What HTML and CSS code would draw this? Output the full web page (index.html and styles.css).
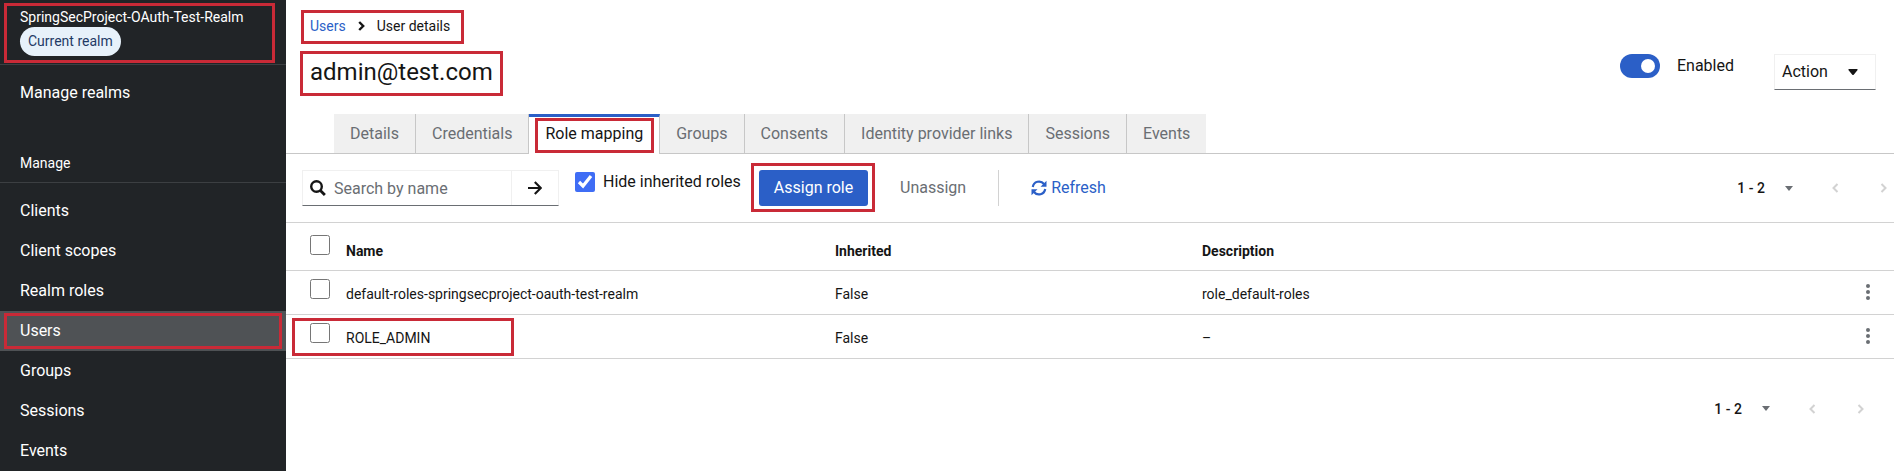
FILE: index.html
```html
<!DOCTYPE html>
<html lang="en">
<head>
<meta charset="utf-8">
<title>User details</title>
<link rel="stylesheet" href="styles.css">
</head>
<body>
<div class="page">
  <aside class="sidebar">
    <div class="realm marked">
      <span>SpringSecProject-OAuth-Test-Realm</span>
      <span class="badge">Current realm</span>
    </div>
    <nav>
      <a class="nav-link nav-realms" href="#">Manage realms</a>
      <h2 class="nav-title">Manage</h2>
      <ul class="nav-list">
        <li><a class="nav-link" href="#">Clients</a></li>
        <li><a class="nav-link" href="#">Client scopes</a></li>
        <li><a class="nav-link" href="#">Realm roles</a></li>
        <li><a class="nav-link current marked" href="#">Users</a></li>
        <li><a class="nav-link" href="#">Groups</a></li>
        <li><a class="nav-link" href="#">Sessions</a></li>
        <li><a class="nav-link" href="#">Events</a></li>
      </ul>
    </nav>
  </aside>
  <main class="main">
    <header class="header">
      <div class="heading">
        <div class="breadcrumb marked">
          <a href="#">Users</a>
          <svg width="7" height="10" viewBox="0 0 7 10"><path d="M1.200 1l4 4-4 4" fill="none" stroke="#151515" stroke-width="2.400"/></svg>
          <span>User details</span>
        </div>
        <h1 class="title marked">admin@test.com</h1>
      </div>
      <div class="actions">
        <label class="switch"><input type="checkbox" role="switch" checked><span>Enabled</span></label>
        <button class="action-menu">Action <svg width="10" height="6" viewBox="0 0 10 6"><path d="M1 0h8q1 .5.400 1.200L5.700 5.700q-.7.500-1.400 0L.6 1.200Q0 .5 1 0z" fill="#151515"/></svg></button>
      </div>
    </header>
    <div class="tabs" role="tablist">
      <button class="tab" role="tab">Details</button>
      <button class="tab" role="tab">Credentials</button>
      <button class="tab selected marked" role="tab" aria-selected="true">Role mapping</button>
      <button class="tab" role="tab">Groups</button>
      <button class="tab" role="tab">Consents</button>
      <button class="tab" role="tab">Identity provider links</button>
      <button class="tab" role="tab">Sessions</button>
      <button class="tab" role="tab">Events</button>
    </div>
    <div class="toolbar">
      <form class="search">
        <svg class="search-icon" width="16" height="16" viewBox="0 0 16 16"><circle cx="6.500" cy="6.500" r="5.300" fill="none" stroke="#151515" stroke-width="2.400"/><path d="M10.400 10.400l4.500 4.500" stroke="#151515" stroke-width="2.800"/></svg>
        <input type="text" placeholder="Search by name" aria-label="Search by name">
        <button type="button" aria-label="Search"><svg width="14" height="14" viewBox="0 0 14 14"><path d="M0 7h12.500M6.800 1l6 6-6 6" fill="none" stroke="#151515" stroke-width="2.200"/></svg></button>
      </form>
      <label class="hide-roles"><input class="check" type="checkbox" checked>Hide inherited roles</label>
      <div class="assign marked"><button class="primary">Assign role</button></div>
      <button class="plain unassign">Unassign</button>
      <button class="plain refresh"><svg width="16" height="16" viewBox="0 0 16 16"><path d="M1.800 7A6.300 6.300 0 0 1 13 4M14.200 9A6.300 6.300 0 0 1 3 12" fill="none" stroke="#2b5fc7" stroke-width="2.200"/><path d="M15.500.8v6H9.500zM.5 15.200v-6h6z" fill="#2b5fc7"/></svg>Refresh</button>
      <div class="pager">
        <button class="range"><span>1 - 2</span><svg width="8" height="5" viewBox="0 0 8 5"><path d="M0 0h8L4 5z" fill="#6a6e73"/></svg></button>
        <button class="step" aria-label="Previous"><svg width="7" height="10" viewBox="0 0 7 10"><path d="M5.500 1l-4 4 4 4" fill="none" stroke="#d2d2d2" stroke-width="2"/></svg></button>
        <button class="step" aria-label="Next"><svg width="7" height="10" viewBox="0 0 7 10"><path d="M1.500 1l4 4-4 4" fill="none" stroke="#d2d2d2" stroke-width="2"/></svg></button>
      </div>
    </div>
    <table class="roles">
      <thead>
        <tr><th class="col-check"><input class="check" type="checkbox" aria-label="Select all"></th><th class="col-name">Name</th><th class="col-inherited">Inherited</th><th>Description</th><th class="col-menu"></th></tr>
      </thead>
      <tbody>
        <tr><td><input class="check" type="checkbox" aria-label="Select default role"></td><td>default-roles-springsecproject-oauth-test-realm</td><td>False</td><td>role_default-roles</td><td><button class="kebab" aria-label="Row actions"><svg width="4" height="16" viewBox="0 0 4 16"><g fill="#6a6e73"><circle cx="2" cy="2" r="2"/><circle cx="2" cy="8" r="2"/><circle cx="2" cy="14" r="2"/></g></svg></button></td></tr>
        <tr><td class="marked"><input class="check" type="checkbox" aria-label="Select ROLE_ADMIN"></td><td>ROLE_ADMIN</td><td>False</td><td>–</td><td><button class="kebab" aria-label="Row actions"><svg width="4" height="16" viewBox="0 0 4 16"><g fill="#6a6e73"><circle cx="2" cy="2" r="2"/><circle cx="2" cy="8" r="2"/><circle cx="2" cy="14" r="2"/></g></svg></button></td></tr>
      </tbody>
    </table>
    <footer class="footer">
      <div class="pager">
        <button class="range"><span>1 - 2</span><svg width="8" height="5" viewBox="0 0 8 5"><path d="M0 0h8L4 5z" fill="#6a6e73"/></svg></button>
        <button class="step" aria-label="Previous"><svg width="7" height="10" viewBox="0 0 7 10"><path d="M5.500 1l-4 4 4 4" fill="none" stroke="#d2d2d2" stroke-width="2"/></svg></button>
        <button class="step" aria-label="Next"><svg width="7" height="10" viewBox="0 0 7 10"><path d="M1.500 1l4 4-4 4" fill="none" stroke="#d2d2d2" stroke-width="2"/></svg></button>
      </div>
    </footer>
  </main>
</div>
</body>
</html>
```
FILE: styles.css
```css
*, *::before, *::after { box-sizing: border-box; }
body { margin: 0; background: #fff; color: #151515; font: 16px/24px Roboto, sans-serif; }
button, input { font: inherit; color: inherit; }
button { border: 0; background: none; padding: 0; }
a { text-decoration: none; color: #2b5fc7; }
svg { flex: none; display: block; }

.page { display: flex; min-height: 100vh; }

/* Red highlight frames laid over the content */
.marked { position: relative; }
.marked::after { content: ""; position: absolute; inset: 0; border: 3px solid #c92a37; pointer-events: none; }

.sidebar { width: 286px; flex: none; background: #212427; color: #fff; }
.realm { display: flex; flex-direction: column; align-items: flex-start; padding: 7px 20px 8px; border-bottom: 1px solid #3c3f42; font-size: 14px; line-height: 20px; }
.realm::after { inset: 3px 11px 1px 4px; }
.badge { padding: 4px 8px; border-radius: 15px; background: #e7f1fa; color: #1f3a66; line-height: 21px; }
.nav-link { display: block; padding: 8px 20px; color: #fff; }
.nav-realms { margin-top: 8px; }
.nav-title { margin: 38px 0 0; padding: 0 20px 7px; border-bottom: 1px solid #3c3f42; font-size: 14px; font-weight: 400; }
.nav-list { list-style: none; margin: 0; padding: 8px 0 0; }
.current { background: #4f5255; }
.current::after { inset: 2px 4px; }

.main { flex: 1; min-width: 0; overflow: hidden; }
.header { display: flex; justify-content: space-between; padding: 16px 18px 24px 24px; }
.breadcrumb { display: flex; align-items: center; gap: 12px; width: fit-content; font-size: 14px; line-height: 20px; }
.breadcrumb::after { inset: -6px -14px -8px -9px; }
.title { margin: 18px 0 0; font-size: 24px; line-height: 36px; font-weight: 400; }
.title::after { inset: -3px -10px -6px -10px; }
.actions { display: flex; gap: 40px; padding-top: 38px; }
.switch { display: flex; gap: 17px; height: 24px; }
.switch input { appearance: none; margin: 0; width: 40px; height: 24px; border-radius: 12px; padding: 5px 5px 5px 21px; background: #2b5fc7; }
.switch input::before { content: ""; display: block; width: 14px; height: 14px; border-radius: 50%; background: #fff; }
.action-menu { display: flex; align-items: center; gap: 20px; width: 102px; height: 36px; padding: 0 7px; border: 1px solid #f0f0f0; border-bottom-color: #6a6e73; }

.tabs { display: flex; padding-left: 48px; border-bottom: 1px solid #c7c7c7; }
.tab { height: 39px; padding: 0 16px; background: #f0f0f0; color: #6a6e73; border-right: 1px solid #c7c7c7; }
.tab:last-child { border-right: 0; }
.selected { height: 40px; margin-bottom: -1px; padding-bottom: 4px; background: #fff; color: #151515; border-top: 3px solid #2b5fc7; }
.selected::after { inset: 1px 5px 1px 6px; }

.toolbar { display: flex; padding: 16px 0; border-bottom: 1px solid #d2d2d2; }
.search { display: flex; align-items: center; width: 257px; height: 36px; margin-left: 16px; border: 1px solid #f0f0f0; border-bottom-color: #6a6e73; }
.search-icon { margin: 0 8px 0 7px; }
.search input { flex: 1; min-width: 0; height: 34px; border: 0; padding: 0; outline: 0; background: none; }
.search input::placeholder { color: #6a6e73; opacity: 1; }
.search button { display: grid; place-items: center; width: 47px; height: 34px; border-left: 1px solid #f0f0f0; }
.check { width: 20px; height: 20px; margin: 0; accent-color: #3f6df5; }
.hide-roles { display: flex; align-items: center; gap: 8px; width: 168px; height: 24px; margin-left: 16px; white-space: nowrap; }
.assign { margin-left: 16px; }
.assign::after { inset: -7px -7px -6px -8px; }
.primary { width: 109px; height: 36px; border-radius: 3px; background: #2b5fc7; color: #fff; }
.plain { height: 36px; }
.unassign { margin-left: 16px; padding: 0 32px 0 16px; border-right: 1px solid #d2d2d2; color: #6a6e73; }
.refresh { display: flex; align-items: center; gap: 4px; margin-left: 32px; color: #2b5fc7; }
.pager { display: flex; align-items: center; height: 36px; margin-left: auto; font-size: 14px; font-weight: 500; }
.range { display: flex; align-items: center; gap: 20px; margin-right: 18px; }
.step { display: grid; place-items: center; width: 48px; height: 36px; }
.toolbar .pager { margin-right: -13px; }

.roles { width: 100%; table-layout: fixed; border-collapse: collapse; font-size: 14px; line-height: 20px; }
.roles tr { border-bottom: 1px solid #d2d2d2; }
.roles th, .roles td { height: 44px; padding: 13px 0 0; text-align: left; vertical-align: top; }
.roles th { height: 47px; padding-top: 18px; font-weight: 700; }
.roles th:first-child { padding: 12px 0 0 24px; }
.roles td:first-child { padding: 8px 0 0 24px; }
.col-check { width: 60px; }
.col-name { width: 489px; }
.col-inherited { width: 367px; }
.col-menu { width: 34px; }
.roles .check { display: block; }
.roles td.marked::after { inset: 3px auto 2px 6px; width: 222px; }
.kebab { display: grid; place-items: center; width: 16px; height: 16px; }
.footer { display: flex; padding: 32px 10px 0 0; }
```
